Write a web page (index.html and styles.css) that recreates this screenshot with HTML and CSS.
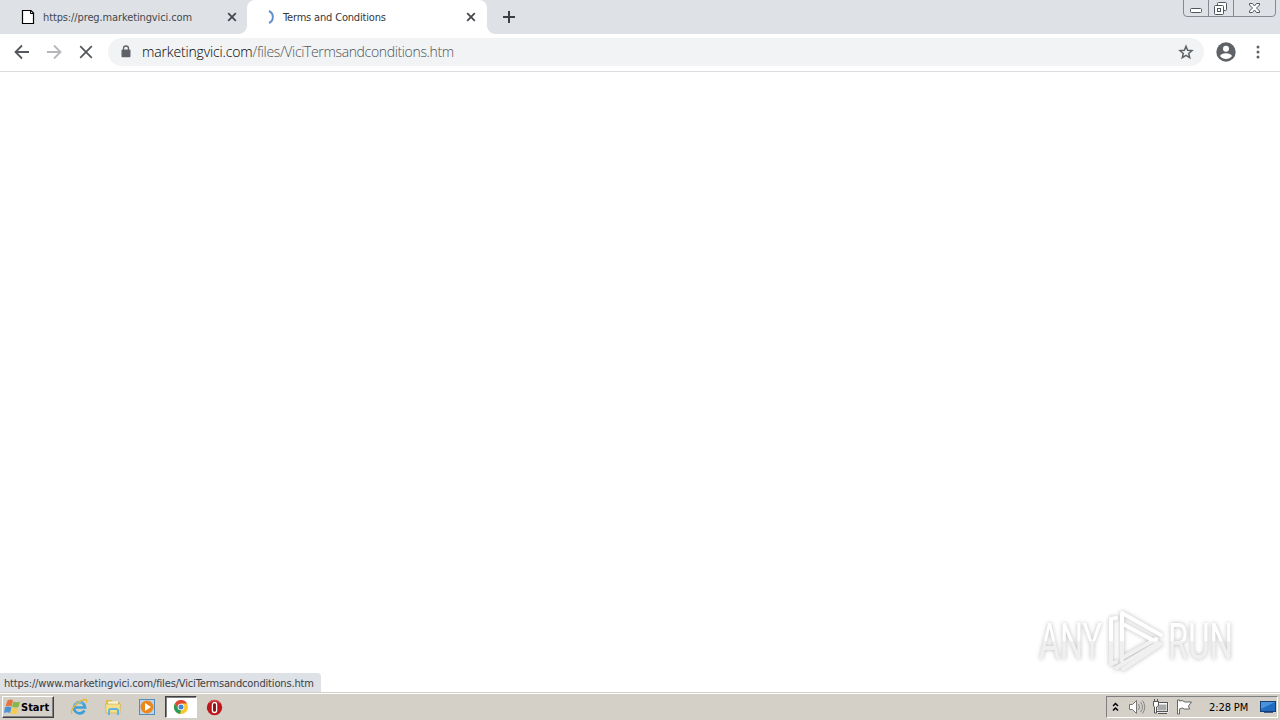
FILE: index.html
```html
<!DOCTYPE html>
<html lang="en">
<head>
    <meta charset="UTF-8">
    <title>Terms and Conditions</title>
    <link rel="stylesheet" href="styles.css">
</head>
<body>
    <header class="tab-strip">
        <div class="tab">
            <svg class="favicon" width="16" height="16" viewBox="0 0 16 16"><path d="M2.500 1.500h8.500l2.500 2.500v10.500h-11z" fill="#fff" stroke="#000" stroke-width="1.200"/><path d="M10.500 2v2.500h3" fill="none" stroke="#000"/></svg>
            <span class="tab-title first-title">https://preg.marketingvici.com</span>
            <svg class="tab-close" width="10" height="10" viewBox="0 0 10 10"><path d="M1.200 1.200l7.600 7.600M8.800 1.200l-7.600 7.600"/></svg>
        </div>
        <div class="tab active">
            <svg class="favicon" width="16" height="16" viewBox="0 0 16 16"><path d="M10 2a6.600 6.600 0 0 1 0 12" fill="none" stroke="#6190cf" stroke-width="2"/></svg>
            <span class="tab-title second-title">Terms and Conditions</span>
            <svg class="tab-close" width="10" height="10" viewBox="0 0 10 10"><path d="M1.200 1.200l7.600 7.600M8.800 1.200l-7.600 7.600"/></svg>
        </div>
        <svg class="new-tab" width="14" height="14" viewBox="0 0 14 14"><path d="M7 1v12M1 7h12"/></svg>
        <svg class="window-buttons" width="94" height="18" viewBox="0 0 94 18">
            <path d="M.5 0v13q0 3.500 3.500 3.500h85q3.500 0 3.500-3.500V0M25.500 0v16M50.500 0v16" fill="none" stroke="#858992"/>
            <g fill="#fff" stroke="#51555e">
                <rect x="7.500" y="8.500" width="11" height="4" rx="1"/>
                <rect x="34.500" y="2.500" width="9" height="8" rx="1"/>
                <rect x="31.500" y="5.500" width="9" height="9" rx="1"/>
                <rect x="34.500" y="8.500" width="3" height="3"/>
                <path d="M66.500 3.500h3l2 2.500 2-2.500h3v1.500l-3 3 3 3v1.500h-3l-2-2.500-2 2.500h-3V11l3-3-3-3z"/>
            </g>
        </svg>
    </header>

    <nav class="toolbar">
        <svg class="nav-icon" width="16" height="16" viewBox="0 0 16 16"><path d="M15 8H2M8 1.500L1.500 8 8 14.500"/></svg>
        <svg class="nav-icon disabled" width="16" height="16" viewBox="0 0 16 16"><path d="M1 8h13M8 1.500L14.500 8 8 14.500"/></svg>
        <svg class="nav-icon" width="16" height="16" viewBox="0 0 16 16"><path d="M2.200 2.200l11.600 11.600M13.800 2.200L2.200 13.800"/></svg>
        <div class="address-bar">
            <svg class="lock" width="10" height="13" viewBox="0 0 10 13"><path d="M2.500 5V3.500a2.500 2.500 0 0 1 5 0V5" fill="none" stroke="#5f6368" stroke-width="1.300"/><rect x="0.500" y="4.500" width="9" height="7.800" rx="1" fill="#5f6368"/></svg>
            <span class="url"><span class="domain">marketingvici.com</span>/files/ViciTermsandconditions.htm</span>
            <svg class="star" width="16" height="16" viewBox="0 0 16 16"><path d="M8 2.200l1.650 4 4.350.35-3.300 2.850 1 4.300L8 11.400l-3.700 2.300 1-4.300L2 6.550l4.350-.35z"/></svg>
        </div>
        <svg class="profile" width="20" height="20" viewBox="0 0 20 20"><circle cx="10" cy="10" r="9.700" fill="#5f6368"/><circle cx="10" cy="6.700" r="3" fill="#fff"/><path d="M4 13.900q1.500-2.600 6-2.600t6 2.600q-2.200 3-6 3t-6-3z" fill="#fff"/></svg>
        <svg class="more" width="4" height="14" viewBox="0 0 4 14"><circle cx="2" cy="2" r="1.500"/><circle cx="2" cy="7" r="1.500"/><circle cx="2" cy="12" r="1.500"/></svg>
    </nav>

    <main class="page">
        <div class="status">https://www.marketingvici.com/files/ViciTermsandconditions.htm</div>
        <svg class="watermark" width="250" height="80" viewBox="0 0 250 80">
            <defs>
                <linearGradient id="shade" gradientUnits="userSpaceOnUse" x1="0" y1="0" x2="0" y2="80">
                    <stop offset=".51" stop-color="#fff"/>
                    <stop offset=".52" stop-color="#f0f0f0"/>
                </linearGradient>
            </defs>
            <g class="watermark-text">
                <text x="9" y="59" textLength="63" lengthAdjust="spacingAndGlyphs">ANY</text>
                <text x="138" y="59" textLength="65" lengthAdjust="spacingAndGlyphs">RUN</text>
            </g>
            <g class="watermark-mark">
                <path d="M86 18l-5 1v45l5-2M93 69l38-25" stroke="url(#shade)"/>
                <path d="M92 61V13l39 22M92 24v-4M93 24l35 19L86 68M92 58l34-19" stroke="url(#shade)"/>
            </g>
        </svg>
    </main>

    <footer class="taskbar">
        <div class="start">
            <svg width="17" height="16" viewBox="0 0 17 16">
                <path d="M3.500 1.500q3-2 5.500 0L7.500 7.500q-3-1.500-6 0z" fill="#e8743d"/>
                <path d="M9.500 2.500q3 1.500 6.500 0L14.500 8q-3.500 1.200-6.500-.3z" fill="#83b94a"/>
                <path d="M1 8.200q3-1.500 6.500 0L6 14q-3-1.500-6 0z" fill="#4b94d3"/>
                <path d="M8 8.500q3 1.300 6.500 .2L13 14.500q-3.500 1.300-6.500-.3z" fill="#f5cb55"/>
            </svg>
            <span>Start</span>
        </div>
        <div class="launchers">
            <svg width="18" height="18" viewBox="0 0 18 18">
                <path d="M14.500 12.500a5.600 5.600 0 1 1 .7-3H5" fill="none" stroke="#3b9fd8" stroke-width="2.600"/>
                <path d="M4.500 7.500a5 5 0 0 1 8-2" fill="none" stroke="#8ad2f2"/>
                <path d="M2 16C-1 12 9 2 15.500 1.500q2 0 .7 3" fill="none" stroke="#e7b83f" stroke-width="1.300"/>
            </svg>
            <svg width="18" height="18" viewBox="0 0 18 18">
                <path d="M2 2h6l1 2h7v9H2z" fill="#dfb94d"/>
                <path d="M4 3.500h10v6H4z" fill="#f8f7d9"/>
                <path d="M1.500 6h15l-.5 9h-14z" fill="#f4df8b" stroke="#cfab47" stroke-width=".6"/>
                <path d="M5 17v-4q0-2 2-2h5q2 0 2 2v4" fill="none" stroke="#63b4dc" stroke-width="2"/>
            </svg>
            <svg width="18" height="18" viewBox="0 0 18 18">
                <rect x="1.500" y="1.500" width="15" height="15" fill="#b9d6ed" stroke="#548dbd"/>
                <circle cx="9" cy="9" r="6.500" fill="#ee871b"/>
                <path d="M7 5l6 4-6 4z" fill="#fff"/>
            </svg>
            <div class="running">
                <svg width="14" height="14" viewBox="0 0 14 14">
                    <circle cx="7" cy="7" r="7" fill="#fbc72f"/>
                    <path d="M.9 3.500A7 7 0 0 1 13.100 3.500H7L4 8.700z" fill="#df4839"/>
                    <path d="M.9 3.500L4 8.700 7 10.500 6 14A7 7 0 0 1 .9 3.500z" fill="#299d57"/>
                    <circle cx="7" cy="7" r="3.300" fill="#fff"/>
                    <circle cx="7" cy="7" r="2.500" fill="#4285d8"/>
                </svg>
            </div>
            <svg width="18" height="18" viewBox="0 0 18 18">
                <circle cx="9.500" cy="9.500" r="7.700" fill="#bd161b"/>
                <path d="M4 5q5.500-5 11 0" fill="none" stroke="#e26766"/>
                <rect x="7.400" y="4.500" width="4.200" height="10" rx="2.100" fill="#8d1014" stroke="#fff" stroke-width="1.300"/>
            </svg>
        </div>
        <div class="tray">
            <svg width="7" height="10" viewBox="0 0 7 10"><path d="M1 4l2.500-2.500L6 4M1 8.500L3.500 6 6 8.500" fill="none" stroke="#000" stroke-width="1.500"/></svg>
            <svg class="speaker" width="18" height="16" viewBox="0 0 18 16"><path d="M1.500 5.500h3l4-4v13l-4-4h-3z" fill="#fff" stroke="#777"/><path d="M10.500 5q2 3 0 6M12.500 3q4 5 0 10M14.500 1.500q4.500 6.500 0 13" fill="none" stroke="#888"/></svg>
            <svg class="network" width="17" height="16" viewBox="0 0 17 16"><rect x="4.500" y="4.500" width="11" height="8" fill="#aaa" stroke="#fff" stroke-width="2"/><rect x="4.500" y="3.500" width="11" height="9" fill="none" stroke="#555"/><path d="M6 14.500h9" stroke="#555"/><path d="M1.500 2.500h5v4l-2 1.500v6h-2V8l-1-1z" fill="#fff" stroke="#555"/><path d="M2.500 0v3M5.500 0v3" stroke="#555"/></svg>
            <svg class="flag" width="17" height="16" viewBox="0 0 17 16"><path d="M1.500 1v14h2v-5q3-2 5 0h5l-1-3 3-4H9Q6 .5 3.500 2V1z" fill="#fff" stroke="#666"/></svg>
            <span class="clock">2:28 PM</span>
            <svg class="desktop" width="17" height="14" viewBox="0 0 17 14"><rect x=".5" y="1.500" width="15" height="10" fill="#216cc0" stroke="#173d77"/><path d="M1 2h14L1 9z" fill="#4b94dc"/><path d="M4 12.500h9" stroke="#455e7d"/></svg>
        </div>
    </footer>
</body>
</html>
```

FILE: styles.css
```css
* {
    box-sizing: border-box;
}
body {
    margin: 0;
    height: 720px;
    display: flex;
    flex-direction: column;
    overflow: hidden;
    background: #fff;
    font-family: "DejaVu Sans Condensed", "DejaVu Sans", sans-serif;
    font-size: 11px;
}
svg {
    flex-shrink: 0;
}
.tab-strip {
    height: 34px;
    display: flex;
    align-items: center;
    background: #dee1e6;
}
.tab {
    width: 247px;
    height: 34px;
    padding: 0 10px 0 20px;
    display: flex;
    align-items: center;
    color: #45484d;
}
.tab.active {
    position: relative;
    width: 240px;
    padding: 0 11px 0 12px;
    background: #fff;
    border-radius: 8px 8px 0 0;
    color: #333639;
}
/* curved feet of the active tab */
.tab.active::before,
.tab.active::after {
    content: "";
    position: absolute;
    bottom: 0;
    width: 8px;
    height: 8px;
}
.tab.active::before {
    left: -8px;
    background: radial-gradient(circle at 0 0, transparent 7.5px, #fff 8px);
}
.tab.active::after {
    right: -8px;
    background: radial-gradient(circle at 100% 0, transparent 7.5px, #fff 8px);
}
.tab-title {
    margin-left: 7px;
    white-space: nowrap;
}
.first-title {
    letter-spacing: -0.12px;
}
.second-title {
    letter-spacing: -0.17px;
}
.tab.active .second-title {
    margin-left: 8px;
}
.tab-close {
    margin-left: auto;
    stroke: #45484d;
    stroke-width: 1.8;
}
.new-tab {
    margin-left: 15px;
    stroke: #3c4043;
    stroke-width: 2;
}
.window-buttons {
    align-self: flex-start;
    margin-left: auto;
    margin-right: 3px;
}
.toolbar {
    height: 38px;
    padding: 0 20px 2px 14px;
    display: flex;
    align-items: center;
    gap: 16px;
    border-bottom: 1px solid #dadce0;
}
.nav-icon {
    fill: none;
    stroke: #55585c;
    stroke-width: 1.8;
}
.nav-icon.disabled {
    stroke: #b5b7ba;
}
.address-bar {
    width: 1096px;
    height: 28px;
    margin-left: -2px;
    padding: 0 10px 0 13px;
    display: flex;
    align-items: center;
    border-radius: 14px;
    background: #f1f3f4;
}
.url {
    margin-left: 11px;
    font-family: "Open Sans", sans-serif;
    font-size: 14px;
    font-weight: 300;
    letter-spacing: -0.35px;
    color: #4f5358;
    white-space: nowrap;
}
.domain {
    letter-spacing: -0.15px;
    color: #000;
}
.star {
    margin-left: auto;
    fill: none;
    stroke: #5f6368;
    stroke-width: 1.5;
}
.profile {
    margin-left: -4px;
}
.more {
    margin-left: 4px;
    fill: #5f6368;
}
.page {
    flex: 1;
    display: flex;
    align-items: flex-end;
    justify-content: space-between;
}
.status {
    width: 321px;
    height: 19px;
    padding-left: 4px;
    border-radius: 0 4px 0 0;
    background: #dee1e6;
    color: #3c4043;
    line-height: 21px;
    letter-spacing: -0.15px;
    white-space: nowrap;
}
.watermark {
    margin-bottom: 12px;
}
.watermark-text {
    font-family: Roboto, sans-serif;
    font-size: 50px;
    fill: url(#shade);
    filter: drop-shadow(0 0 2px #bbb);
}
.watermark-mark {
    fill: none;
    stroke-width: 4;
    stroke-linejoin: round;
    stroke-linecap: round;
    filter: drop-shadow(0 0 2px #bbb);
}
.taskbar {
    height: 28px;
    padding: 2px 2px 1px 2px;
    display: flex;
    align-items: center;
    border-top: 1px solid #d4d0c8;
    box-shadow: inset 0 1px #fff;
    background: #d4d0c8;
}
.start {
    width: 52px;
    height: 22px;
    padding-left: 1px;
    display: flex;
    align-items: center;
    border: 1px solid;
    border-color: #fff #404040 #404040 #fff;
    box-shadow: inset -1px -1px #808080;
    font-weight: bold;
}
.launchers {
    margin-left: 16px;
    display: flex;
    align-items: center;
    gap: 16px;
}
.running {
    width: 32px;
    height: 22px;
    margin: 0 -8px 0 -7px;
    display: flex;
    align-items: center;
    justify-content: center;
    border: 1px solid;
    border-color: #404040 #fff #fff #404040;
    box-shadow: inset 1px 1px #808080;
    background: #fff;
}
.tray {
    width: 172px;
    height: 22px;
    margin-left: auto;
    padding-left: 5px;
    display: flex;
    align-items: center;
    border: 1px solid;
    border-color: #808080 #fff #fff #808080;
}
.speaker {
    margin-left: 9px;
}
.network {
    margin-left: 6px;
}
.flag {
    margin-left: 7px;
}
.clock {
    margin-left: 16px;
    letter-spacing: -0.1px;
    white-space: nowrap;
}
.desktop {
    margin-left: auto;
}
```
